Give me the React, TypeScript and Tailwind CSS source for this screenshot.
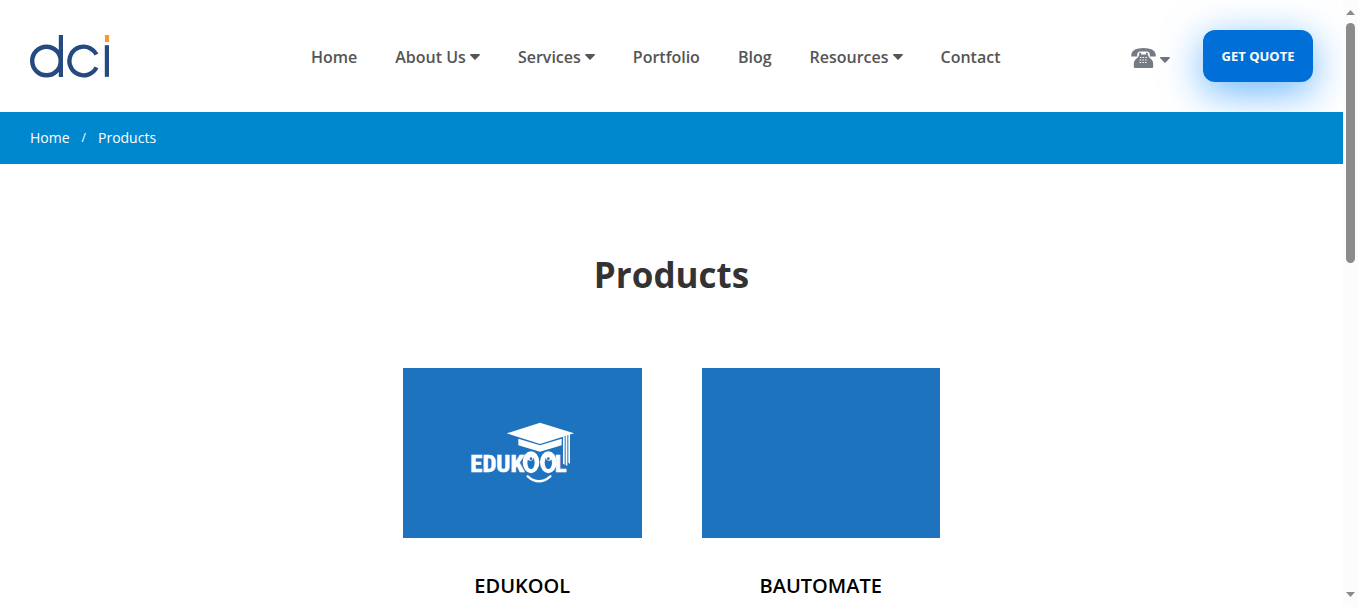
const navItems = [
  { label: "Home" },
  { label: "About Us", menu: true },
  { label: "Services", menu: true },
  { label: "Portfolio" },
  { label: "Blog" },
  { label: "Resources", menu: true },
  { label: "Contact" },
];

function Caret() {
  return (
    <svg viewBox="0 0 10 6" className="h-[6px] w-[10px] fill-current" aria-hidden="true">
      <path d="M0.8 0h8.4q1.2 0.2 0.4 1.2L5.6 5.4q-0.6 0.6-1.2 0L0.4 1.2Q-0.4 0.2 0.8 0z" />
    </svg>
  );
}

function DciLogo() {
  return (
    <svg viewBox="0 0 80 43" className="h-[43px] w-20" role="img" aria-label="dci">
      <g fill="none" stroke="#264a80" strokeWidth="4.4">
        <circle cx="16.5" cy="26" r="14.3" />
        <circle cx="53.700" cy="26" r="14.3" pathLength="360" strokeDasharray="307 53" transform="rotate(26.5 53.7 26)" />
      </g>
      <rect x="28.800" y="0" width="4.200" height="42" fill="#264a80" />
      <rect x="74.800" y="10.200" width="4.200" height="31.600" fill="#264a80" />
      <rect x="74.900" y="0" width="4.200" height="7" fill="#f79a2c" />
    </svg>
  );
}

function EdukoolLogo() {
  return (
    <svg viewBox="30 33 315 192" className="h-16 w-[105px]" role="img" aria-label="Edukool">
      <g
        fill="#fff"
        stroke="#fff"
        strokeWidth="2"
        fontSize="74"
        className="font-['Liberation_Sans_Narrow','Roboto_Condensed','Open_Sans_Condensed',sans-serif] font-bold"
      >
        <text x="31" y="187">EDUK</text>
        <text x="284" y="187">L</text>
      </g>
      <g fill="#fff">
        <path d="M140 70L240 38L342 70L240 102z" />
        <path d="M175 86L240 106L305 86V106L240 125L175 106z" />
        <path d="M309 80l5-2v86l-5-3zM317 77l5-2v93l-5-3zM325 75l5-2v88l-5-3z" />
      </g>
      <g fill="#fff">
        <ellipse cx="213" cy="157" rx="25" ry="33" />
        <ellipse cx="265" cy="157" rx="25" ry="33" />
      </g>
      <g fill="#1e73be">
        <ellipse cx="213" cy="158" rx="11" ry="19" />
        <ellipse cx="265" cy="158" rx="11" ry="19" />
      </g>
      <g fill="#fff">
        <circle cx="211" cy="143" r="9" />
        <circle cx="267" cy="143" r="9" />
      </g>
      <g fill="#1e73be">
        <circle cx="213" cy="146" r="4" />
        <circle cx="265" cy="146" r="4" />
      </g>
      <path d="M203 199Q237 229 271 199" fill="none" stroke="#fff" strokeWidth="7" strokeLinecap="round" />
    </svg>
  );
}

function Telephone() {
  return (
    <svg viewBox="0 0 25 20" className="h-5 w-[25px]" aria-hidden="true">
      <path
        fill="#747b82"
        d="M0.300 8.500V6Q1.500 0 12.500 0T24.700 6V8.500H18.800V6.300Q18.600 4.300 16.500 3.600H8.500Q6.400 4.300 6.200 6.300V8.500z"
      />
      <path
        fill="#747b82"
        d="M8.200 4.800h1.800v1.700h5V4.800h1.800V7Q17.500 9.500 20.500 11.500Q22.200 13 22.200 15.500V18.700Q22.200 20 21 20H4Q2.800 20 2.800 18.700V15.500Q2.800 13 4.500 11.500Q7.500 9.500 8.200 7z"
      />
      <g stroke="#fff" strokeWidth="1" strokeDasharray="1.500 1.200">
        <path d="M9 9.500h7M8.600 12h8M8.600 14.500h8" />
      </g>
    </svg>
  );
}

function ProductCard({ name, logo }: { name: string; logo?: boolean }) {
  return (
    <article className="flex flex-1 flex-col">
      <a href="#" aria-label={name} className="flex h-[170px] items-center justify-center bg-[#1e73be]">
        {logo && <EdukoolLogo />}
      </a>
      <h2 className="mt-8 text-center text-xl leading-8 font-semibold text-black">{name}</h2>
    </article>
  );
}

export default function App() {
  return (
    <div className="flex h-screen overflow-hidden bg-white font-['Open_Sans','Noto_Sans',sans-serif]">
      <div className="min-w-0 flex-1 overflow-hidden">
        <header className="flex h-28 items-center px-[30px]">
          <a href="#" className="w-[281px] shrink-0">
            <DciLogo />
          </a>
          <nav className="flex items-center gap-[38px] pt-0.5 text-base leading-6 font-semibold whitespace-nowrap text-[#555]">
            {navItems.map((item) => (
              <a key={item.label} href="#" className="flex items-center gap-1">
                {item.label}
                {item.menu && <Caret />}
              </a>
            ))}
          </nav>
          <div className="ml-auto flex items-center gap-[33px]">
            <button type="button" aria-label="Phone numbers" className="flex items-center gap-1 pt-1 text-[#6c757d]">
              <Telephone />
              <span className="pt-1">
                <Caret />
              </span>
            </button>
            <a
              href="#"
              className="flex h-[52px] w-[110px] items-center justify-center rounded-xl bg-[#0070d8] pt-0.5 text-[13px] font-bold whitespace-nowrap text-white shadow-[0_10px_40px_rgba(0,132,255,0.6)]"
            >
              GET QUOTE
            </a>
          </div>
        </header>

        <nav
          aria-label="Breadcrumb"
          className="relative flex h-[52px] items-center gap-3 bg-[#0088cf] px-[30px] text-sm text-white"
        >
          <a href="#">Home</a>
          <span className="text-xs">/</span>
          <span>Products</span>
        </nav>

        <main className="flex flex-col items-center pt-[87px]">
          <h1 className="text-[35px] leading-[48px] font-bold text-[#333]">Products</h1>
          <div className="mt-[69px] flex w-full max-w-[537px] gap-[60px]">
            <ProductCard name="EDUKOOL" logo />
            <ProductCard name="BAUTOMATE" />
          </div>
        </main>
      </div>

      <div aria-hidden="true" className="flex w-[15px] shrink-0 flex-col items-center bg-[#fcfcfc] py-[10px] text-[#8b8b8b]">
        <svg viewBox="0 0 9 5" className="h-[5px] w-[9px] fill-current">
          <path d="M4.500 0L9 5H0z" />
        </svg>
        <div className="mt-2 h-[240px] w-[9px] rounded-full bg-[#8b8b8b]" />
        <svg viewBox="0 0 9 5" className="mt-auto h-[5px] w-[9px] fill-current">
          <path d="M4.500 5L9 0H0z" />
        </svg>
      </div>
    </div>
  );
}
